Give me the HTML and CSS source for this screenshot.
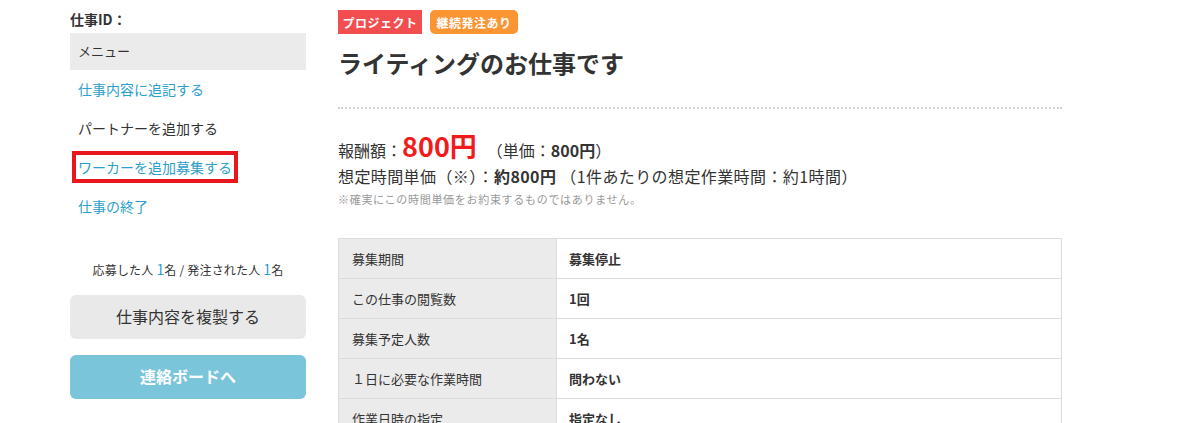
FILE: index.html
```html
<!DOCTYPE html>
<html lang="ja">
<head>
<meta charset="utf-8">
<title>ライティングのお仕事です</title>
<link rel="stylesheet" href="styles.css">
</head>
<body>
<div class="page">
  <aside class="side">
    <div class="side-id">仕事ID：</div>
    <div class="menu-head">メニュー</div>
    <ul class="menu">
      <li class="menu-item"><a class="link">仕事内容に追記する</a></li>
      <li class="menu-item"><span class="plain">パートナーを追加する</span></li>
      <li class="menu-item"><a class="link boxed">ワーカーを追加募集する</a></li>
      <li class="menu-item"><a class="link">仕事の終了</a></li>
    </ul>
    <p class="counts">応募した人 <span class="num">1</span>名 / 発注された人 <span class="num">1</span>名</p>
    <div class="btn btn-gray">仕事内容を複製する</div>
    <div class="btn btn-blue">連絡ボードへ</div>
  </aside>
  <main class="main">
    <div class="badges">
      <span class="badge badge-red">プロジェクト</span>
      <span class="badge badge-orange">継続発注あり</span>
    </div>
    <h1 class="title">ライティングのお仕事です</h1>
    <div class="pay">
      <div class="pay-line">報酬額：<span class="price">800円</span><span class="unit">（単価：<b>800円</b>）</span></div>
      <div class="pay-line2">想定時間単価（※）：<b>約800円</b> （1件あたりの想定作業時間：約1時間）</div>
      <div class="note">※確実にこの時間単価をお約束するものではありません。</div>
    </div>
    <table class="info">
      <tr><th>募集期間</th><td>募集停止</td></tr>
      <tr><th>この仕事の閲覧数</th><td>1回</td></tr>
      <tr><th>募集予定人数</th><td>1名</td></tr>
      <tr><th>１日に必要な作業時間</th><td>問わない</td></tr>
      <tr><th>作業日時の指定</th><td>指定なし</td></tr>
    </table>
  </main>
</div>
</body>
</html>
```

FILE: styles.css
```css
* { box-sizing: border-box; }
html, body { margin: 0; padding: 0; background: #fff; }
body {
  font-family: "Noto Sans CJK JP", "Noto Sans", sans-serif;
  color: #333;
  overflow: hidden;
  height: 423px;
}
.page {
  display: flex;
  gap: 32px;
  padding-left: 70px;
}
.side {
  width: 236px;
  flex: none;
  padding-top: 9px;
}
.side-id {
  font-size: 14px;
  font-weight: bold;
  line-height: 20px;
  height: 24px;
}
.menu-head {
  background: #ebebeb;
  height: 37px;
  line-height: 36px;
  padding-left: 8px;
  font-size: 13px;
  color: #333;
}
.menu { list-style: none; margin: 0; padding: 0; }
.menu-item {
  height: 39px;
  display: flex;
  align-items: center;
  padding-left: 8px;
  padding-bottom: 2px;
  font-size: 14px;
}
.link { color: #2e9fca; text-decoration: none; }
.plain { color: #333; }
.boxed {
  display: inline-block;
  border: 4px solid #e8161d;
  margin-left: -6px;
  padding: 0 2px;
  line-height: 24px;
}
.counts {
  margin: 34px 0 0;
  height: 20px;
  text-align: center;
  font-size: 12px;
  line-height: 20px;
  color: #333;
  letter-spacing: 0.2px;
}
.num { color: #2e9fca; font-size: 14px; line-height: 16px; }
.btn {
  border-radius: 6px;
  height: 44px;
  display: flex;
  align-items: center;
  justify-content: center;
  font-size: 16px;
  padding-bottom: 2px;
}
.btn-gray { background: #e9e9e9; color: #333; margin-top: 15px; }
.btn-blue { background: #7bc5db; color: #fff; font-weight: bold; margin-top: 16px; }

.main { width: 724px; flex: none; padding-top: 10px; }
.badges { display: flex; gap: 8px; height: 24px; }
.badge {
  display: inline-flex;
  align-items: center;
  justify-content: center;
  height: 24px;
  color: #fff;
  font-size: 12px;
  font-weight: bold;
  white-space: nowrap;
  letter-spacing: 0.5px;
}
.badge-red { background: #f24d4f; width: 84px; }
.badge-orange { background: #fb9433; border-radius: 5px; width: 88px; }
.title {
  margin: 12px 0 0;
  font-size: 24px;
  line-height: 34px;
  font-weight: bold;
  color: #333;
  padding-bottom: 27px;
  border-bottom: 2px dotted #d0d0d0;
}
.pay { margin-top: 23px; }
.pay-line { font-size: 16px; height: 32px; line-height: 32px; white-space: nowrap; }
.price { color: #f21b1b; font-size: 27px; font-weight: bold; line-height: 1; }
.unit { margin-left: 10px; }
.pay-line2 { font-size: 16px; height: 24px; line-height: 24px; letter-spacing: 0.4px; white-space: nowrap; }
.note { font-size: 11px; color: #999; height: 22px; line-height: 22px; letter-spacing: 0.7px; }
.info {
  margin-top: 28px;
  width: 724px;
  border-collapse: collapse;
  font-size: 13px;
}
.info th, .info td {
  border: 1px solid #dcdcdc;
  height: 40px;
  padding: 0 12px 1px;
  text-align: left;
  vertical-align: middle;
}
.info th { background: #ebebeb; width: 218px; font-weight: normal; padding-left: 13px; color: #333; }
.info td { font-weight: bold; color: #333; }
```
